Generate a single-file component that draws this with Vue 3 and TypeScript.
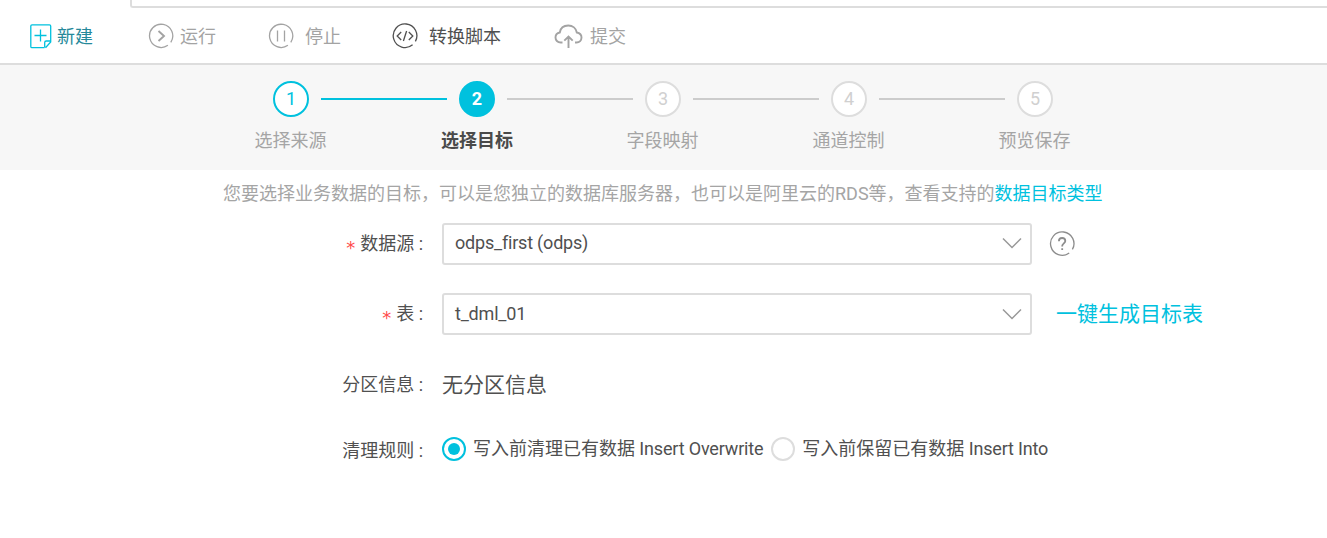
<script setup lang="ts">
import { ref } from 'vue'

interface Step { id: number; title: string }
interface Rule { id: string; label: string; sql: string }

const steps: Step[] = [
  { id: 1, title: '选择来源' },
  { id: 2, title: '选择目标' },
  { id: 3, title: '字段映射' },
  { id: 4, title: '通道控制' },
  { id: 5, title: '预览保存' },
]
const current = ref(2)

const rules: Rule[] = [
  { id: 'overwrite', label: '写入前清理已有数据', sql: 'Insert Overwrite' },
  { id: 'into', label: '写入前保留已有数据', sql: 'Insert Into' },
]
const rule = ref('overwrite')

const stepState = (id: number) =>
  id < current.value ? 'done' : id === current.value ? 'active' : 'waiting'
</script>

<template>
  <div class="page">
    <div class="tabs"><div class="tab-edge"></div></div>

    <nav class="toolbar">
      <button class="tool create">
        <svg width="22" height="25" viewBox="0 0 22 25">
          <path d="M14.5 23.7H2a1.2 1.2 0 0 1-1.2-1.2V2A1.2 1.2 0 0 1 2 .8h17.500A1.200 1.200 0 0 1 20.700 2v16L15.500 23.700M14.700 23.500v-5a1.500 1.500 0 0 1 1.500-1.500h4.500M10.500 5.500v12M4.500 11.500h12" />
        </svg>
        <span>新建</span>
      </button>
      <button class="tool run">
        <svg width="26" height="26" viewBox="0 0 26 26">
          <path d="M22.800 19.300A11.600 11.600 0 1 0 19.900 22.300" />
          <path class="bold" d="M10.500 8l5.500 5-5.500 5" />
        </svg>
        <span>运行</span>
      </button>
      <button class="tool stop">
        <svg width="26" height="26" viewBox="0 0 26 26">
          <path d="M22.800 19.300A11.600 11.600 0 1 0 19.900 22.300M9.500 7.500v11M16.500 7.500v11" />
        </svg>
        <span>停止</span>
      </button>
      <button class="tool script">
        <svg width="26" height="26" viewBox="0 0 26 26">
          <path d="M23.400 18.400A11.800 11.800 0 1 0 20.600 21.800M9.200 9L5.200 13l4 4M16.800 9l4 4-4 4M14.600 8l-3.200 10" />
        </svg>
        <span>转换脚本</span>
      </button>
      <button class="tool submit">
        <svg width="29" height="25" viewBox="0 0 29 25">
          <path class="bold" d="M8.500 18.500H6.700C3.500 18.500 1.500 16.200 1.500 13.500c0-2.500 1.800-4.500 4.300-5C6.500 4 10 1.500 14.300 1.500s7.800 2.700 8.500 7c2.700.5 4.700 2.500 4.700 5 0 2.800-2 5-5 5h-1.500M14.500 24V12.500M10.300 16.700l4.200-4.200 4.200 4.200" />
        </svg>
        <span>提交</span>
      </button>
    </nav>

    <section class="stepper">
      <div v-for="s in steps" :key="s.id" class="step" :class="stepState(s.id)">
        <div class="track">
          <span class="circle">{{ s.id }}</span>
          <i v-if="s.id < steps.length" class="line"></i>
        </div>
        <div class="title">{{ s.title }}</div>
      </div>
    </section>

    <p class="hint">您要选择业务数据的目标，可以是您独立的数据库服务器，也可以是阿里云的RDS等，查看支持的<a>数据目标类型</a></p>

    <form class="form">
      <div class="row">
        <label class="label"><b>*</b>数据源 :</label>
        <div class="select">
          <span>odps_first (odps)</span>
          <svg width="20" height="12" viewBox="0 0 20 12"><path d="M1 1.500l9 9 9-9" /></svg>
        </div>
        <svg class="help" width="26" height="26" viewBox="0 0 26 26">
          <path d="M23.400 18.400A11.700 11.700 0 1 0 20.200 22" />
          <path class="mark" d="M9.900 10.200c0-2 1.300-3.200 3.200-3.200s3.200 1.200 3.200 3c0 2.200-3.100 2.500-3.100 5v.500M13.200 17.200v1.800" />
        </svg>
      </div>
      <div class="row table">
        <label class="label"><b>*</b>表 :</label>
        <div class="select">
          <span>t_dml_01</span>
          <svg width="20" height="12" viewBox="0 0 20 12"><path d="M1 1.500l9 9 9-9" /></svg>
        </div>
        <a class="generate">一键生成目标表</a>
      </div>
      <div class="row partition">
        <label class="label">分区信息 :</label>
        <span class="value">无分区信息</span>
      </div>
      <div class="row cleanup">
        <label class="label">清理规则 :</label>
        <div class="radios">
          <span v-for="r in rules" :key="r.id" class="radio" :class="{ checked: rule === r.id }" @click="rule = r.id">
            <i class="dot"></i><span>{{ r.label }}<span class="sql">&nbsp;{{ r.sql }}</span></span>
          </span>
        </div>
      </div>
    </form>
  </div>
</template>

<style>
body { margin: 0; background: #fff; }
</style>

<style scoped>
.page {
  width: 1327px;
  height: 538px;
  overflow: hidden;
  background: #fff;
  color: #505050;
  font: 18px/26px Roboto, "Noto Sans CJK SC", sans-serif;
  white-space: nowrap;
}
.page * { box-sizing: border-box; }
svg { display: block; flex: none; fill: none; stroke: currentColor; stroke-width: 1.3; }
.bold { stroke-width: 1.9; }

.tabs { height: 8px; padding-left: 130px; overflow: hidden; display: flex; align-items: flex-end; }
.tab-edge { flex: 1; height: 20px; border: 2px solid #ddd; border-width: 0 0 2px 2px; border-radius: 0 0 0 3px; }

.toolbar { height: 57px; border-bottom: 2px solid #ddd; display: flex; align-items: center; padding: 1px 0 0 30px; }
.tool { display: flex; align-items: center; height: 26px; padding: 0; border: 0; background: none; color: #a3a3a3; font: inherit; }
.tool span { padding-top: 2px; }
.create { width: 118px; gap: 5px; color: #00c1de; }
.create span { color: #26899a; }
.run { width: 120px; gap: 6px; }
.stop { width: 124px; gap: 11px; }
.script { width: 162px; gap: 11px; color: #505050; }
.submit { gap: 7px; }

.stepper { height: 105px; padding: 16px 0 0 198px; background: #f7f7f7; display: flex; }
.step { width: 186px; }
.track { display: flex; align-items: center; padding-left: 75px; }
.circle {
  flex: none; width: 36px; height: 36px; border: 2px solid #ddd; border-radius: 50%;
  background: #fff; color: #d0d0d0; text-align: center; line-height: 32px;
}
.line { flex: none; width: 126px; height: 2px; margin-left: 12px; background: #ccc; }
.title { margin-top: 11px; padding-right: 1px; text-align: center; color: #a5a5a5; }
.done .circle { border-color: #00c1de; color: #00c1de; }
.done .line { background: #00c1de; }
.active .circle { border-color: #00c1de; background: #00c1de; color: #fff; font-weight: 700; }
.active .title { padding-right: 0; color: #4a4a4a; font-weight: 700; }

.hint { margin: 0; padding: 11px 0 0 223px; height: 53px; color: #a5a5a5; }
a { color: #00c1de; }

.row { display: flex; align-items: center; height: 42px; margin-bottom: 28px; }
.label { width: 424px; margin-right: 18px; padding-right: 1px; text-align: right; }
.label b {
  display: inline-block; margin-right: 5px; transform: translateY(4px);
  color: #ff4b4b; font: 400 18px/20px "DejaVu Sans", sans-serif;
}
.select {
  width: 590px; height: 42px; padding: 0 8px 2px 11px; border: 2px solid #ddd; border-radius: 3px;
  display: flex; align-items: center; justify-content: space-between; letter-spacing: -0.2px;
}
.table .select { padding-bottom: 0; }
.select svg { color: #999; stroke-width: 1.5; }
.help { margin-left: 17px; color: #8c8c8c; }
.mark { stroke-width: 1.8; }
.generate { margin-left: 24px; font-size: 21px; }
.partition { padding-top: 2px; }
.partition .value { font-size: 21px; }
.cleanup { margin-top: -4px; }
.cleanup .label { padding-top: 2px; }
.radios { display: flex; gap: 8px; margin-bottom: 3px; }
.radio { display: flex; align-items: center; gap: 7px; }
.sql { letter-spacing: -0.17px; }
.dot { width: 24px; height: 24px; border: 2px solid #ddd; border-radius: 50%; display: grid; place-items: center; }
.checked .dot { border-color: #00c1de; }
.checked .dot::after { content: ""; width: 12px; height: 12px; border-radius: 50%; background: #00c1de; }
</style>
